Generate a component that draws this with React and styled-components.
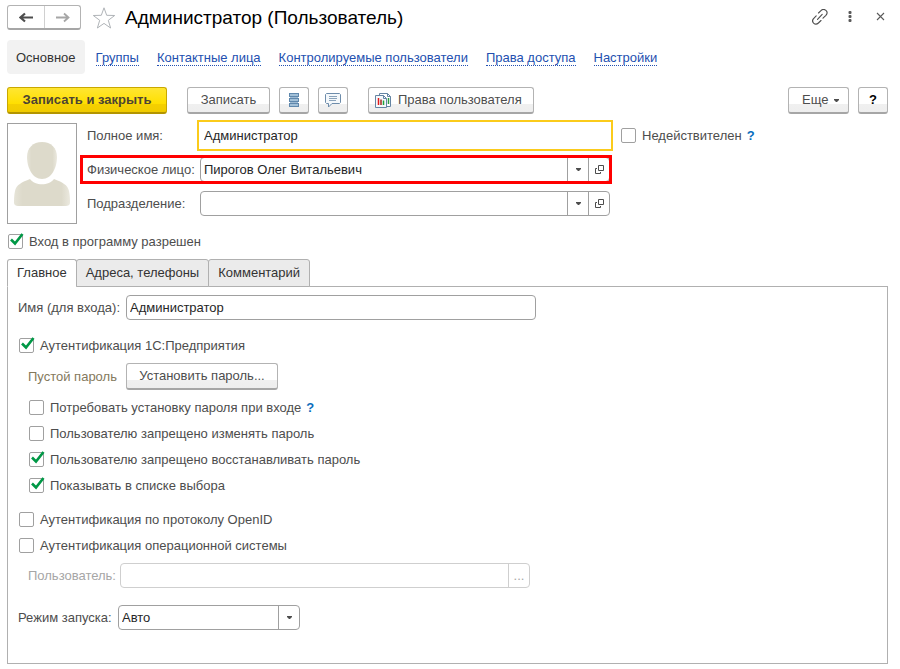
import React, { useState } from 'react'
import styled, { createGlobalStyle, css } from 'styled-components'

const GlobalStyle = createGlobalStyle`
  * {
    box-sizing: border-box;
  }
  body {
    margin: 0;
    background: #ffffff;
    color: #4d4d4d;
    font: 13px/16px "Liberation Sans", Arial, sans-serif;
  }
  button, input, select {
    margin: 0;
    font: inherit;
    color: inherit;
  }
`

const Page = styled.main`
  padding: 5px 12px 5px 7px;
`
const Header = styled.header`
  display: flex;
  align-items: center;
  height: 25px;
`
const History = styled.div`
  display: flex;
  height: 25px;
  border: 1px solid #b3b3b3;
  border-bottom: 2px solid #a6a6a6;
  border-radius: 3px;
`
const HistoryButton = styled.button`
  display: flex;
  align-items: center;
  justify-content: center;
  width: 36px;
  padding: 0;
  border: 0;
  background: none;
  color: ${props => props.disabled ? '#a6a6a6' : '#4d4d4d'};
  & + & {
    border-left: 1px solid #d0d0d0;
  }
`
const IconButton = styled.button`
  display: flex;
  align-items: center;
  justify-content: center;
  width: 24px;
  height: 24px;
  padding: 0;
  border: 0;
  background: none;
  color: #4d4d4d;
`
const Title = styled.h1`
  flex: 1;
  margin: 0 0 0 9px;
  color: #000000;
  font-size: 19px;
  line-height: 24px;
  font-weight: 400;
`
const WindowTools = styled.div`
  display: flex;
  gap: 6px;
  padding-bottom: 2px;
  margin-right: -4px;
`
const Favorite = styled(IconButton)`
  margin-left: 11px;
`

const Sections = styled.nav`
  display: flex;
  align-items: baseline;
  gap: 18px;
  margin-top: 10px;
`
const SectionLink = styled.a`
  color: #2350b0;
  text-decoration: none;
  border-bottom: 1px dotted #2350b0;
  line-height: 14px;
  ${props => props.$active && css`
    padding: 10px 9px 8px;
    margin-right: -7px;
    border: 0;
    border-radius: 4px;
    background: #f2f2f2;
    color: #333333;
    line-height: 16px;
  `}
`

const Toolbar = styled.div`
  display: flex;
  gap: 9px;
  margin-top: 13px;
`
const Gap = styled.div`
  flex: ${props => props.$grow ? '1' : '0 0 2px'};
`
const Button = styled.button`
  display: flex;
  align-items: center;
  justify-content: ${props => props.$start ? 'flex-start' : 'center'};
  gap: 6px;
  height: 27px;
  min-width: ${props => props.$width || 30}px;
  padding: 0 0 0 ${props => props.$start || 0}px;
  border: 1px solid #b3b3b3;
  border-bottom: 2px solid #a6a6a6;
  border-radius: 3px;
  background: linear-gradient(#ffffff 68%, #f0f0f0 68%, #eeeeee);
  color: ${props => props.$dark ? '#000000' : '#4d4d4d'};
  font-weight: ${props => props.$dark ? '700' : '400'};
  white-space: nowrap;
`
const PrimaryButton = styled(Button)`
  border-color: #c9a800;
  border-bottom-color: #b39500;
  background: linear-gradient(#ffe632, #ffdf00 66%, #f5d000 68%, #f0cb00);
  color: #4d4333;
  font-weight: 700;
`

const Person = styled.section`
  display: flex;
  gap: 10px;
  margin-top: 9px;
`
const Photo = styled.div`
  flex: none;
  width: 70px;
  height: 101px;
  border: 1px solid #a0a0a0;
`
const Fields = styled.div`
  display: flex;
  flex-direction: column;
  align-items: flex-start;
  gap: 9px;
`
const Row = styled.div`
  position: relative;
  display: flex;
  align-items: center;
  height: 25px;
`
const Highlight = styled.span`
  position: absolute;
  top: -2px;
  right: -2px;
  bottom: -2px;
  left: -7px;
  border: 3px solid #ff0000;
  pointer-events: none;
`
const FieldLabel = styled.label`
  flex: none;
  width: ${props => props.$width}px;
  padding-left: ${props => props.$indent || 0}px;
  color: ${props => props.$muted ? '#a6a6a6' : 'inherit'};
  white-space: nowrap;
`
const Field = styled.div`
  display: flex;
  width: 410px;
  height: 25px;
  border: 1px solid ${props => props.$disabled ? '#cfcfcf' : '#a0a0a0'};
  border-radius: ${props => props.$focused ? '0' : '4px'};
  background: #ffffff;
  ${props => props.$focused && css`
    border-color: transparent;
    outline: 2px solid #fbcb1b;
    outline-offset: 1px;
  `}
`
const TextInput = styled.input`
  flex: 1;
  min-width: 0;
  padding: 0 3px;
  border: 0;
  outline: 0;
  background: none;
  color: #262626;
`
const FieldButton = styled.button`
  display: flex;
  align-items: center;
  justify-content: center;
  width: 21px;
  padding: 0;
  border: 0;
  border-left: 1px solid ${props => props.disabled ? '#cfcfcf' : '#a0a0a0'};
  background: none;
  color: ${props => props.disabled ? '#a6a6a6' : '#4d4d4d'};
`
const SelectField = styled.div`
  display: grid;
  grid-template-columns: 159px 21px;
  height: 25px;
  border: 1px solid #a0a0a0;
  border-radius: 4px;
`
const Select = styled.select`
  grid-area: 1 / 1 / 2 / 3;
  appearance: none;
  padding: 0 24px 0 3px;
  border: 0;
  outline: 0;
  background: none;
  color: #262626;
`
const SelectArrow = styled.span`
  grid-area: 1 / 2;
  display: flex;
  align-items: center;
  justify-content: center;
  border-left: 1px solid #a0a0a0;
  pointer-events: none;
`

const CheckLabel = styled.label`
  display: flex;
  align-items: center;
  gap: 6px;
  height: 15px;
  white-space: nowrap;
`
const CheckCell = styled.span`
  display: grid;
  width: 15px;
  height: 15px;
  svg {
    grid-area: 1 / 1;
    overflow: visible;
    pointer-events: none;
  }
`
const CheckInput = styled.input`
  grid-area: 1 / 1;
  appearance: none;
  width: 15px;
  height: 15px;
  border: 1px solid #a0a0a0;
  border-radius: 2px;
  background: #ffffff;
`
const CheckRow = styled.div`
  display: flex;
  align-items: center;
  gap: 5px;
`
const Hint = styled.button`
  padding: 0;
  border: 0;
  background: none;
  color: #0a6ebd;
  font-weight: 700;
  line-height: 15px;
`
const Allowed = styled(CheckRow)`
  margin: 10px 0 10px 1px;
`
const Invalid = styled(CheckRow)`
  margin-left: 11px;
`

const Tabs = styled.div`
  display: flex;
`
const Tab = styled.button`
  height: 28px;
  padding: 0 9px;
  margin-bottom: -1px;
  border: 1px solid #b0b0b0;
  border-bottom-color: ${props => props.$active ? '#ffffff' : '#b0b0b0'};
  border-radius: 3px 3px 0 0;
  background: ${props => props.$active ? '#ffffff' : '#ebebeb'};
  color: #333333;
  & + & {
    margin-left: -1px;
  }
`
const Panel = styled.section`
  display: flex;
  flex-direction: column;
  padding: 8px 10px 33px;
  border: 1px solid #b0b0b0;
`
const Auth = styled.div`
  display: flex;
  flex-direction: column;
  gap: 10px;
  margin: 18px 0 17px 1px;
`
const Options = styled.div`
  display: flex;
  flex-direction: column;
  gap: 11px;
  margin-left: 10px;
`
const Others = styled.div`
  display: flex;
  flex-direction: column;
  gap: 11px;
  margin: 2px 0 10px 1px;
`
const PasswordRow = styled.div`
  display: flex;
  align-items: center;
`
const PasswordState = styled.span`
  width: 107px;
  padding-left: 9px;
  color: #84795c;
`
const UserRow = styled(Row)`
  margin-bottom: 17px;
`

const BackIcon = () => (
  <svg width="15" height="11" viewBox="0 0 15 11" fill="none" stroke="currentColor" strokeWidth="2.2">
    <path d="M14 5.5H2M6 1.5l-4.500 4 4.500 4" />
  </svg>
)

const ForwardIcon = () => (
  <svg width="15" height="11" viewBox="0 0 15 11" fill="none" stroke="currentColor" strokeWidth="1.8">
    <path d="M1 5.5h12M9 1.5l4.500 4-4.500 4" />
  </svg>
)

const StarIcon = () => (
  <svg width="24" height="24" viewBox="0 0 24 24">
    <path
      d="M12 1.8l2.700 7.500 8 .2-6.400 4.800 2.300 7.700-6.600-4.600L5.400 22l2.300-7.700L1.300 9.500l8-.2z"
      fill="none"
      stroke="#b0b4b8"
    />
  </svg>
)

const LinkIcon = () => (
  <svg width="16" height="16" viewBox="0 0 16 16" fill="none" stroke="currentColor" strokeWidth="1.1" strokeLinecap="round">
    <path d="M6.500 4l2.200-2.200c1.600-1.600 3.800-1.600 5.200-.4 1.500 1.400 1.300 3.500 0 4.900L11 9.200" />
    <path d="M4.200 6.800L1.800 9.300c-1.500 1.500-1.500 3.500-.2 4.800 1.400 1.300 3.400 1.200 4.800-.1L9 11.500" />
    <path d="M5.500 10.300l4.700-5" />
  </svg>
)

const DotsIcon = () => (
  <svg width="4" height="12" viewBox="0 0 4 12" fill="#5a5a5a">
    <rect x="0.5" y="0" width="3" height="3" rx="1" />
    <rect x="0.5" y="4" width="3" height="3" rx="1" />
    <rect x="0.5" y="8" width="3" height="3" rx="1" />
  </svg>
)

const CloseIcon = () => (
  <svg width="9" height="9" viewBox="0 0 9 9">
    <path d="M1 1l7 7M8 1L1 8" stroke="#5a5a5a" strokeWidth="1.1" />
  </svg>
)

const ListIcon = () => (
  <svg width="10" height="14" viewBox="0 0 10 14">
    <path d="M0 0h10v4H0zM0 5h10v4H0zM0 10h10v4H0z" fill="#5f88ad" />
    <path d="M1 4.500h8M1 9.500h8" stroke="#9db9d2" />
    <path d="M1 2h8M1 7h8M1 12h8" stroke="#b9d2e6" strokeWidth="1.5" />
  </svg>
)

const CommentIcon = () => (
  <svg width="16" height="15" viewBox="0 0 16 15">
    <path d="M1.500.5h13l1 1v8l-1 1H7l-3.500 3.500v-3.500h-2l-1-1v-8z" fill="#f4f8fb" stroke="#6d8cab" />
    <path d="M4 3.500h8M4 5.500h8M4 7.500h7" stroke="#8aa3bb" />
  </svg>
)

const ReportIcon = () => (
  <svg width="17" height="17" viewBox="0 0 17 17">
    <path d="M4.500 1.500h8l3 3v10h-11z" fill="#ffffff" stroke="#6484a3" />
    <path d="M12.500 1.500v3h3" fill="none" stroke="#6484a3" />
    <path d="M13.500 6v6" stroke="#2b9b45" strokeWidth="1.5" />
    <path d="M.5 3.500h8l3 3v9H.5z" fill="#f5f8fb" stroke="#6484a3" />
    <path d="M8.500 3.500v3h3" fill="none" stroke="#6484a3" />
    <path d="M3.500 6v7" stroke="#e01b1b" strokeWidth="1.5" />
    <path d="M6 7.500V13" stroke="#a32a20" strokeWidth="1.5" />
    <path d="M8.500 8.500V13" stroke="#20a33a" strokeWidth="1.5" />
  </svg>
)

const CaretIcon = () => (
  <svg width="5" height="3" viewBox="0 0 5 3" fill="currentColor">
    <path d="M0 0h5v1L3 3H2L0 1z" />
  </svg>
)

const OpenIcon = () => (
  <svg width="9" height="9" viewBox="0 0 9 9" fill="none" stroke="currentColor">
    <path d="M3.500.5h5v5h-5z" />
    <path d="M2 3.500H.5v5h5V7" />
  </svg>
)

const CheckIcon = () => (
  <svg width="15" height="15" viewBox="0 0 15 15">
    <path d="M3 5.500L7 9.500l7.500-9.500" fill="none" stroke="#009846" strokeWidth="2.6" />
  </svg>
)

const PersonIcon = () => (
  <svg width="68" height="99" viewBox="0 0 68 99">
    <defs>
      <linearGradient id="person" x1="0" x2="1">
        <stop offset="0" stopColor="#e6e4d8" />
        <stop offset="0.15" stopColor="#dddacb" />
        <stop offset="0.85" stopColor="#dddacb" />
        <stop offset="1" stopColor="#ebe9df" />
      </linearGradient>
    </defs>
    <path
      d="M34 18c9 0 15 6 15 15 0 10-5 22-15 22S19 43 19 33c0-9 6-15 15-15z"
      fill="url(#person)"
    />
    <path
      d="M22 55c5 7 19 7 24 0 8 3 14 6 15 12 1 4 1 9 1 12 0 2-2 3-4 3H10c-2 0-4-1-4-3 0-3 0-8 1-12 1-6 7-9 15-12z"
      fill="url(#person)"
    />
  </svg>
)

const Check = ({ label, initial = false }) => {
  const [checked, setChecked] = useState(initial)
  return (
    <CheckLabel>
      <CheckCell>
        <CheckInput type="checkbox" checked={checked} onChange={e => setChecked(e.target.checked)} />
        {checked && <CheckIcon />}
      </CheckCell>
      {label}
    </CheckLabel>
  )
}

const ComboField = ({ id, value }) => (
  <Field>
    <TextInput id={id} defaultValue={value} />
    <FieldButton type="button" aria-label="Выбрать"><CaretIcon /></FieldButton>
    <FieldButton type="button" aria-label="Открыть"><OpenIcon /></FieldButton>
  </Field>
)

const sections = ['Основное', 'Группы', 'Контактные лица', 'Контролируемые пользователи', 'Права доступа', 'Настройки']
const tabs = ['Главное', 'Адреса, телефоны', 'Комментарий']

export default function App() {
  const [tab, setTab] = useState(tabs[0])

  return (
    <Page>
      <GlobalStyle />
      <Header>
        <History>
          <HistoryButton type="button" aria-label="Назад"><BackIcon /></HistoryButton>
          <HistoryButton type="button" aria-label="Вперед" disabled><ForwardIcon /></HistoryButton>
        </History>
        <Favorite type="button" aria-label="В избранное"><StarIcon /></Favorite>
        <Title>Администратор (Пользователь)</Title>
        <WindowTools>
          <IconButton type="button" aria-label="Ссылка"><LinkIcon /></IconButton>
          <IconButton type="button" aria-label="Меню"><DotsIcon /></IconButton>
          <IconButton type="button" aria-label="Закрыть"><CloseIcon /></IconButton>
        </WindowTools>
      </Header>

      <Sections>
        {sections.map((name, i) => (
          <SectionLink key={name} href="#" $active={i === 0}>{name}</SectionLink>
        ))}
      </Sections>

      <Toolbar>
        <PrimaryButton type="button" $width={160}>Записать и закрыть</PrimaryButton>
        <Gap />
        <Button type="button" $width={83}>Записать</Button>
        <Button type="button" aria-label="Список"><ListIcon /></Button>
        <Button type="button" aria-label="Комментарий"><CommentIcon /></Button>
        <Gap />
        <Button type="button" $width={166} $start={6}><ReportIcon />Права пользователя</Button>
        <Gap $grow />
        <Button type="button" $width={61} $start={13}>Еще <CaretIcon /></Button>
        <Button type="button" $dark>?</Button>
      </Toolbar>

      <Person>
        <Photo><PersonIcon /></Photo>
        <Fields>
          <Row>
            <FieldLabel htmlFor="fullName" $width={113}>Полное имя:</FieldLabel>
            <Field $focused>
              <TextInput id="fullName" defaultValue="Администратор" />
            </Field>
            <Invalid>
              <Check label="Недействителен" />
              <Hint type="button">?</Hint>
            </Invalid>
          </Row>
          <Row>
            <FieldLabel htmlFor="person-name" $width={113}>Физическое лицо:</FieldLabel>
            <ComboField id="person-name" value="Пирогов Олег Витальевич" />
            <Highlight />
          </Row>
          <Row>
            <FieldLabel htmlFor="department" $width={113}>Подразделение:</FieldLabel>
            <ComboField id="department" value="" />
          </Row>
        </Fields>
      </Person>

      <Allowed>
        <Check label="Вход в программу разрешен" initial />
      </Allowed>

      <Tabs role="tablist">
        {tabs.map(name => (
          <Tab
            key={name}
            type="button"
            role="tab"
            aria-selected={tab === name}
            $active={tab === name}
            onClick={() => setTab(name)}
          >
            {name}
          </Tab>
        ))}
      </Tabs>

      <Panel role="tabpanel">
        <Row>
          <FieldLabel htmlFor="login" $width={108}>Имя (для входа):</FieldLabel>
          <Field>
            <TextInput id="login" defaultValue="Администратор" />
          </Field>
        </Row>

        <Auth>
          <Check label="Аутентификация 1С:Предприятия" initial />
          <PasswordRow>
            <PasswordState>Пустой пароль</PasswordState>
            <Button type="button" $width={152}>Установить пароль...</Button>
          </PasswordRow>
          <Options>
            <CheckRow>
              <Check label="Потребовать установку пароля при входе" />
              <Hint type="button">?</Hint>
            </CheckRow>
            <Check label="Пользователю запрещено изменять пароль" />
            <Check label="Пользователю запрещено восстанавливать пароль" initial />
            <Check label="Показывать в списке выбора" initial />
          </Options>
        </Auth>

        <Others>
          <Check label="Аутентификация по протоколу OpenID" />
          <Check label="Аутентификация операционной системы" />
        </Others>

        <UserRow>
          <FieldLabel htmlFor="osUser" $width={102} $indent={10} $muted>Пользователь:</FieldLabel>
          <Field $disabled>
            <TextInput id="osUser" disabled />
            <FieldButton type="button" disabled>...</FieldButton>
          </Field>
        </UserRow>

        <Row>
          <FieldLabel htmlFor="launch" $width={100}>Режим запуска:</FieldLabel>
          <SelectField>
            <Select id="launch" defaultValue="Авто">
              <option>Авто</option>
            </Select>
            <SelectArrow><CaretIcon /></SelectArrow>
          </SelectField>
        </Row>
      </Panel>
    </Page>
  )
}
